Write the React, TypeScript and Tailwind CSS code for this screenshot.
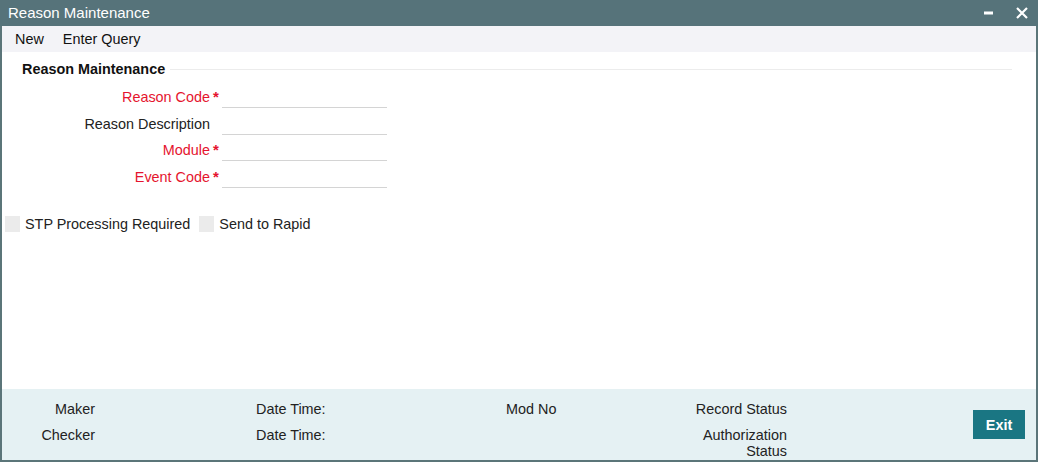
import React from "react";

const Req = () => (
  <span className="w-[12px] pl-[3px] text-[#e5142e] font-bold text-[15px] leading-none self-start mt-[3px]">*</span>
);

function Row({ label, req }: { label: string; req?: boolean }) {
  return (
    <div className="flex items-center h-[22px]">
      <div className={`w-[208px] text-right ${req ? "text-[#e5142e]" : "text-[#222]"}`}>{label}</div>
      {req ? <Req /> : <span className="w-[12px]" />}
      <div className="w-[165px] h-[22px] border-b border-[#d4d4d4]" />
    </div>
  );
}

export default function App() {
  return (
    <div
      className="w-[1040px] h-[463px] bg-white text-[14.4px] leading-[16px] text-[#222]"
      style={{ fontFamily: '"Liberation Sans", Arial, sans-serif' }}
    >
      <div className="w-[1038px] h-[462px] border-x-2 border-b-2 border-[#5b7579] flex flex-col">
        {/* Title bar */}
        <div className="h-[26px] -mx-[2px] bg-[#56737a] flex items-center pl-[8px] pr-[10px] text-white text-[15px]">
          <span className="flex-1">Reason Maintenance</span>
          <svg width="10" height="4" viewBox="0 0 10 4" className="mr-[22px]">
            <rect x="0" y="0.5" width="9" height="3" fill="white" />
          </svg>
          <svg width="12" height="12" viewBox="0 0 12 12">
            <path d="M1 1 L11 11 M11 1 L1 11" stroke="white" strokeWidth="2.2" />
          </svg>
        </div>
        {/* Toolbar */}
        <div className="h-[26px] bg-[#f3f3f7] flex items-center pl-[13px] gap-[19px] text-[#111]">
          <span>New</span>
          <span>Enter Query</span>
        </div>
        {/* Section heading */}
        <div className="flex items-center pl-[20px] pr-[24px] mt-[9px]">
          <span className="font-bold text-[#111] mr-[5px]">Reason Maintenance</span>
          <div className="flex-1 h-px bg-[#ececec]" />
        </div>
        {/* Form */}
        <div className="flex flex-col gap-[4.6px] mt-[9px]">
          <Row label="Reason Code" req />
          <Row label="Reason Description" />
          <Row label="Module" req />
          <Row label="Event Code" req />
        </div>
        {/* Checkboxes */}
        <div className="flex items-center mt-[28px] pl-[3px]">
          <div className="w-[15px] h-[16px] bg-[#ebebeb]" />
          <span className="ml-[5px]">STP Processing Required</span>
          <div className="w-[15px] h-[16px] bg-[#ebebeb] ml-[9px]" />
          <span className="ml-[5px]">Send to Rapid</span>
        </div>
        <div className="flex-1" />
        {/* Footer */}
        <div className="h-[71px] bg-[#e5f1f3] flex pt-[12px]">
          <div className="w-[93px] flex flex-col gap-[10px] text-right">
            <span>Maker</span>
            <span>Checker</span>
          </div>
          <div className="w-[250px] ml-[161px] flex flex-col gap-[10px]">
            <span>Date Time:</span>
            <span>Date Time:</span>
          </div>
          <div className="w-[150px]">Mod No</div>
          <div className="w-[131px] flex flex-col gap-[10px] text-right">
            <span>Record Status</span>
            <span>
              Authorization
              <br />
              Status
            </span>
          </div>
          <div className="ml-[186px] pt-[9px]">
            <div className="w-[52px] h-[29px] bg-[#1a7683] text-white font-bold flex items-center justify-center">
              Exit
            </div>
          </div>
        </div>
      </div>
    </div>
  );
}
